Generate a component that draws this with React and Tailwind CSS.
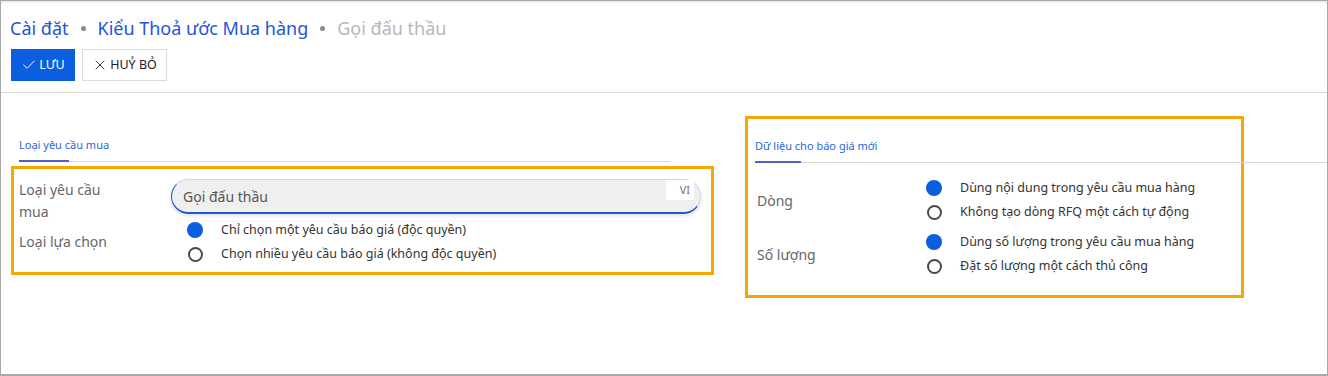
import { Check, X } from 'lucide-react';

function Radio({ checked, label }) {
  return (
    <div className="flex items-center h-6">
      <span className="w-4 flex justify-center">
        {checked ? (
          <span className="w-4 h-4 rounded-full bg-[#0b5ee0]" />
        ) : (
          <span className="w-[15px] h-[15px] rounded-full border-2 border-[#4a4a4a]" />
        )}
      </span>
      <span className="ml-[18px] text-[12.5px] text-[#333]">{label}</span>
    </div>
  );
}

function Tab({ label, width, underline }) {
  return (
    <div className="border-b border-[#d8d8d8]" style={{ width }}>
      <div className="h-[29px] flex items-center text-[11px] text-[#2a66dc]">{label}</div>
      <div className="h-[2px] bg-[#5060c8] -mb-px" style={{ width: underline }} />
    </div>
  );
}

export default function App() {
  return (
    <div className="w-[1328px] h-[376px] bg-white border border-[#a8a8a8] border-b-2 shadow-[inset_0_3px_3px_-2px_rgba(0,0,0,0.12)] font-['Noto_Sans',sans-serif] overflow-hidden">
      <div className="pt-[15px] pl-[9px] flex items-center text-[18px] leading-6">
        <span className="text-[#2454d8]">Cài đặt</span>
        <span className="mx-[12px] w-[5px] h-[5px] rounded-full bg-[#8a8a8a]" />
        <span className="text-[#2454d8]">Kiểu Thoả ước Mua hàng</span>
        <span className="mx-[12px] w-[5px] h-[5px] rounded-full bg-[#8a8a8a]" />
        <span className="text-[#b4b8bf]">Gọi đấu thầu</span>
      </div>
      <div className="pl-[10px] mt-[9px] flex gap-[7px]">
        <button className="h-8 w-16 bg-[#0b5ee0] text-white flex items-center justify-center gap-[2px] text-[12.5px]">
          <Check size={16} strokeWidth={1.5} /> LƯU
        </button>
        <button className="h-8 w-[85px] bg-white border border-[#dcdcdc] text-[#222] flex items-center justify-center gap-[2px] text-[12.5px]">
          <X size={16} strokeWidth={1.3} /> HUỶ BỎ
        </button>
      </div>
      <div className="mt-[11px] border-t border-[#dadada]" />
      <div className="flex">
        <div className="w-[733px] pt-[38px]">
          <div className="ml-[18px]">
            <Tab label="Loại yêu cầu mua" width={651} underline={50} />
          </div>
          <div className="ml-[10px] mt-[4px] w-[703px] h-[109px] border-[3px] border-[#f5a800] pl-[5px] pr-[10px]">
            <div className="grid grid-cols-[152px_1fr] pt-[10px] h-[45px]">
              <div className="text-[14px] leading-[22px] text-[#666] w-[110px]">Loại yêu cầu mua</div>
              <div className="relative h-[35px] rounded-full bg-[#efefef] border border-[#c9d6f2] border-l-[#1a5ad8] border-b-2 border-b-[#1a5ad8] shadow-[0_2px_4px_rgba(0,0,0,0.12)] flex items-center pl-[11px] text-[14px] text-[#555]">
                Gọi đấu thầu
                <span className="absolute right-[6px] top-0 h-[20px] w-[28px] bg-white flex items-center justify-end pr-[4px] text-[11px] text-[#7a6f8a]">VI</span>
              </div>
            </div>
            <div className="grid grid-cols-[152px_1fr] mt-[4px]">
              <div className="flex items-center text-[14px] text-[#666] -mt-px">Loại lựa chọn</div>
              <div className="pl-[16px]">
                <Radio checked label="Chỉ chọn một yêu cầu báo giá (độc quyền)" />
                <Radio label="Chọn nhiều yêu cầu báo giá (không độc quyền)" />
              </div>
            </div>
          </div>
        </div>
        <div className="pt-[23px] ml-[11px]">
          <div className="w-[499px] h-[182px] border-[3px] border-[#f5a800] pl-[7px]">
            <div className="pt-[13px]">
              <Tab label="Dữ liệu cho báo giá mới" width={580} underline={46} />
            </div>
            <div className="grid grid-cols-[169px_1fr] mt-[13px] pl-[2px]">
              <div className="flex items-center text-[14px] text-[#666]">Dòng</div>
              <div>
                <Radio checked label="Dùng nội dung trong yêu cầu mua hàng" />
                <Radio label="Không tạo dòng RFQ một cách tự động" />
              </div>
            </div>
            <div className="grid grid-cols-[169px_1fr] mt-[6px] pl-[2px]">
              <div className="flex items-center text-[14px] text-[#666]">Số lượng</div>
              <div>
                <Radio checked label="Dùng số lượng trong yêu cầu mua hàng" />
                <Radio label="Đặt số lượng một cách thủ công" />
              </div>
            </div>
          </div>
        </div>
      </div>
    </div>
  );
}
